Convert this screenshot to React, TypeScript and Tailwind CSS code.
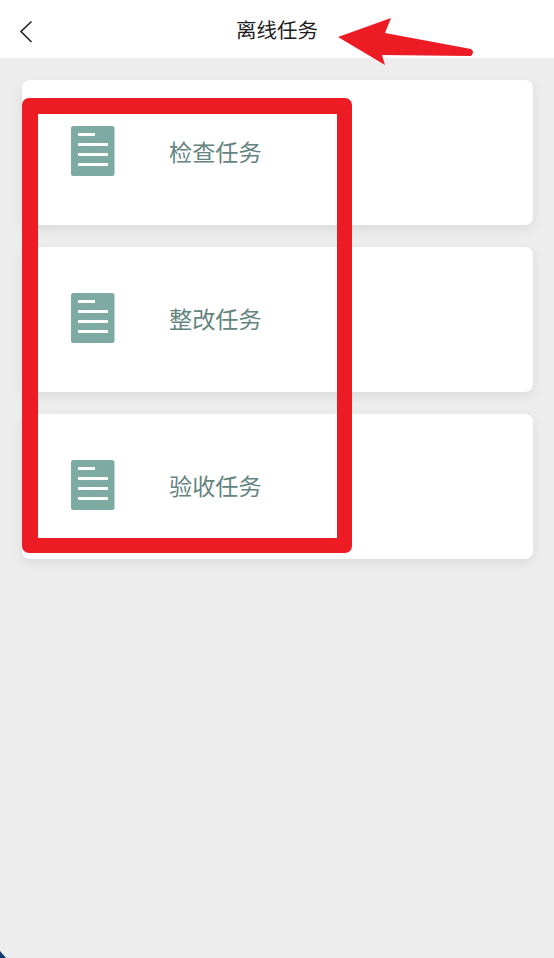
const tasks = ['检查任务', '整改任务', '验收任务'];

const DocIcon = () => (
  <svg width="44" height="50" viewBox="0 0 44 50" className="shrink-0">
    <rect x="0" y="0" width="43.5" height="50" rx="2.5" fill="#7daaa3" />
    <rect x="7" y="7" width="17" height="3" fill="#fff" />
    <rect x="7" y="17" width="30" height="3" fill="#fff" />
    <rect x="7" y="27" width="30" height="3" fill="#fff" />
    <rect x="7" y="37" width="30" height="3" fill="#fff" />
  </svg>
);

const App = () => {
  return (
    <div
      className="relative h-[958px] w-[554px] overflow-hidden bg-[#ededed]"
      style={{ fontFamily: '"Noto Sans CJK SC", "Liberation Sans", sans-serif' }}
    >
      {/* Header */}
      <div className="relative flex h-[58px] items-center justify-center bg-white">
        <svg width="14" height="24" viewBox="0 0 14 24" className="absolute left-[19px] top-[20px]" fill="none">
          <path d="M12.5 1.5 L2 11.5 L12.5 22" stroke="#222" strokeWidth="1.6" />
        </svg>
        <h1 className="text-[20.5px] font-normal leading-none text-[#1c1c1c]">离线任务</h1>
      </div>

      {/* Cards */}
      <div className="flex flex-col gap-[22px] pl-[22px] pr-[21px] pt-[22px]">
        {tasks.map((task) => (
          <div
            key={task}
            className="flex h-[145px] items-center rounded-[8px] bg-white pb-[4px] pl-[49px] shadow-[0_4px_12px_rgba(0,0,0,0.08)]"
          >
            <DocIcon />
            <span className="ml-[54px] mt-[3px] text-[23.2px] leading-none text-[#648480]">{task}</span>
          </div>
        ))}
      </div>

      {/* Red annotation */}
      <div className="absolute left-[22px] top-[98px] h-[455px] w-[330px] rounded-[7px] border-[16px] border-r-[15px] border-b-[15px] border-[#ed1c24]" />
      <svg width="554" height="80" viewBox="0 0 554 80" className="absolute left-0 top-0">
        <path
          d="M338 37 L391 18 L385 33 L471 49 Q475 52 471 56 L382 55 L385 65 Z"
          fill="#ed1c24"
        />
      </svg>

      {/* Corner */}
      <svg width="8" height="8" viewBox="0 0 8 8" className="absolute bottom-0 left-0">
        <path d="M0 1 L6 8 L0 8 Z" fill="#123a6b" />
      </svg>
    </div>
  );
};

export default App;
